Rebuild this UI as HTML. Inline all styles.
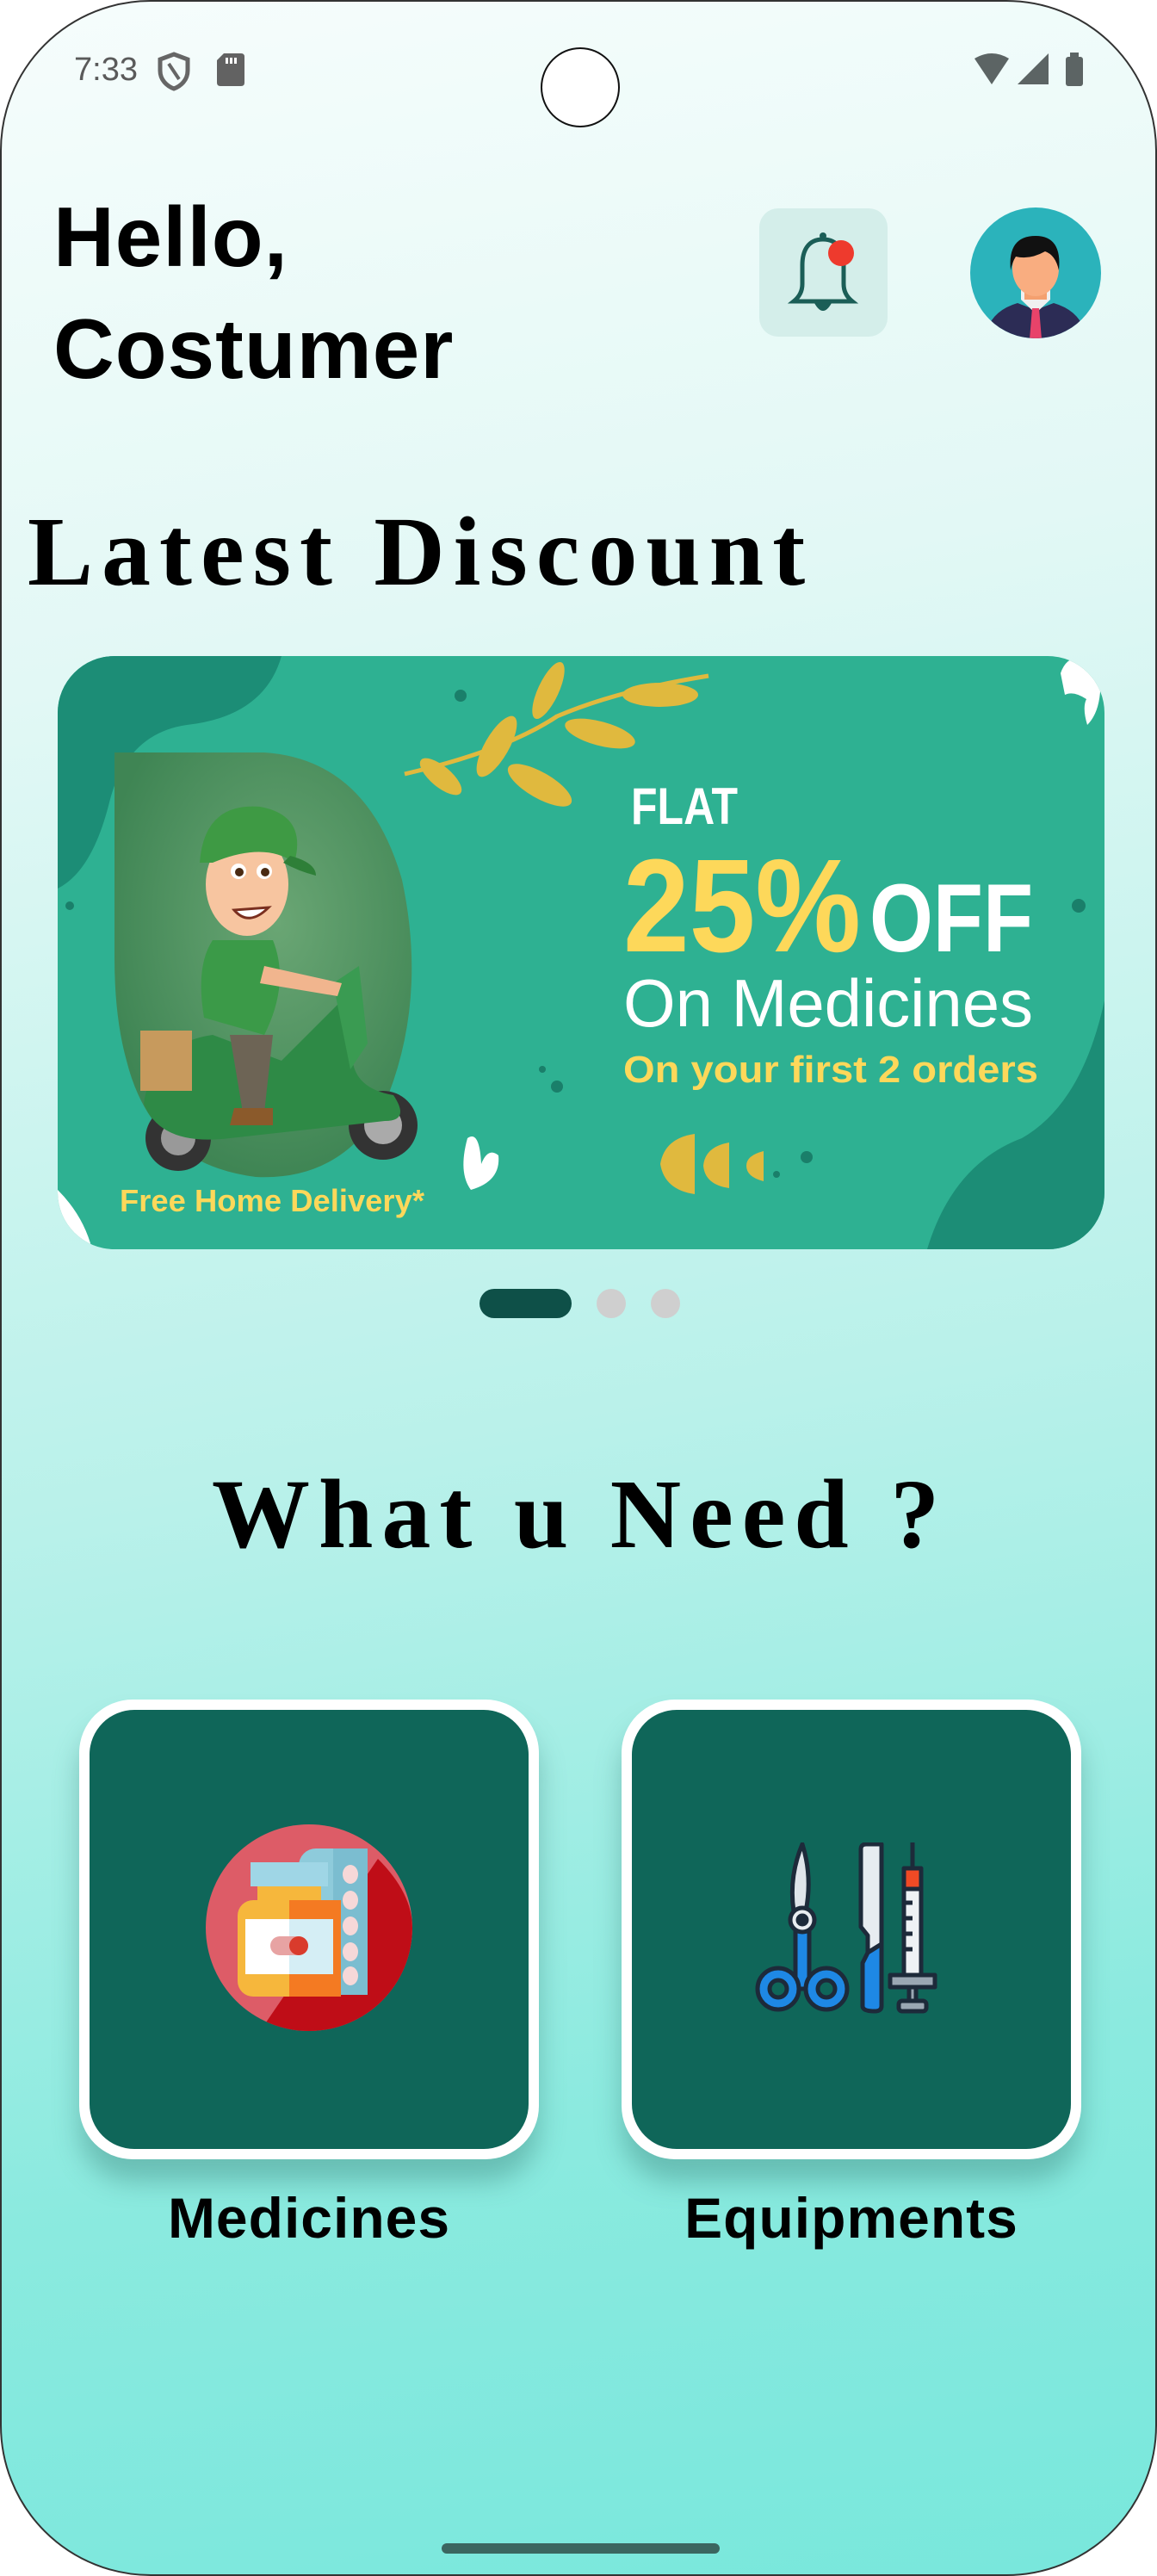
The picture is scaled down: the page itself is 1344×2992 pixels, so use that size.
<!DOCTYPE html>
<html><head><meta charset="utf-8">
<style>
*{margin:0;padding:0;box-sizing:border-box}
html,body{width:1344px;height:2992px;background:#fff;overflow:hidden;font-family:"Liberation Sans",sans-serif}
.phone{position:absolute;left:0;top:0;width:1344px;height:2992px;border-radius:175px;border:2px solid #333;overflow:hidden;background:linear-gradient(170deg,#f6fdfc 0%,#e2f8f5 25%,#b9f1ea 55%,#8beadf 80%,#78e7dc 100%)}
.abs{position:absolute}
.hello{left:60px;font-weight:bold;font-size:98px;color:#000;letter-spacing:1px;line-height:1}
.serif{font-family:"Liberation Serif",serif;font-weight:bold;color:#000;font-size:114px;letter-spacing:10px;line-height:1;white-space:nowrap}
.card{width:534px;height:534px;border-radius:62px;background:#fff;box-shadow:0 26px 30px rgba(40,110,100,.35)}
.card .in{position:absolute;left:12px;top:12px;right:12px;bottom:12px;border-radius:52px;background:#0f6659}
.lbl{font-size:66px;font-weight:bold;color:#000;width:534px;text-align:center;letter-spacing:1px}
</style></head><body>
<div class="phone">
  <!-- status bar -->
  <div class="abs" style="left:84px;top:58px;font-size:38px;color:#5a5a5a">7:33</div>
  <svg class="abs" style="left:180px;top:58px" width="40" height="46" viewBox="0 0 40 46"><path d="M20 3 L36 9 V22 C36 33 28 40 20 43 C12 40 4 33 4 22 V9 Z" fill="none" stroke="#666" stroke-width="5"/><path d="M14 14 L26 32" stroke="#666" stroke-width="4"/></svg>
  <svg class="abs" style="left:250px;top:60px" width="32" height="38" viewBox="0 0 32 38"><path d="M8 0 H28 Q32 0 32 4 V34 Q32 38 28 38 H4 Q0 38 0 34 V8 Z" fill="#626262"/><rect x="10" y="5" width="3" height="7" fill="#fff"/><rect x="15" y="5" width="3" height="7" fill="#fff"/><rect x="20" y="5" width="3" height="7" fill="#fff"/></svg>
  <div class="abs" style="left:626px;top:53px;width:92px;height:93px;border-radius:50%;background:#fff;border:2px solid #111"></div>
  <svg class="abs" style="left:1128px;top:58px" width="136" height="42" viewBox="0 0 136 42"><path d="M2 8 Q22 -4 42 8 L22 38 Z" fill="#5c6464"/><path d="M52 38 L88 2 V38 Z" fill="#5c6464"/><rect x="108" y="6" width="20" height="34" rx="3" fill="#5c6464"/><rect x="113" y="1" width="10" height="6" fill="#5c6464"/></svg>

  <!-- header -->
  <div class="abs hello" style="top:224px">Hello,</div>
  <div class="abs hello" style="top:354px">Costumer</div>
  <div class="abs" style="left:880px;top:240px;width:149px;height:149px;border-radius:22px;background:#d4eeea"></div>
  <svg class="abs" style="left:880px;top:240px" width="149" height="149" viewBox="0 0 149 149">
    <path d="M74 36 C56 36 50 50 50 66 V88 Q50 100 40 108 H108 Q98 100 98 88 V66 C98 50 92 36 74 36 Z" fill="none" stroke="#1b5e57" stroke-width="5"/>
    <path d="M64 110 Q74 128 84 110 Z" fill="#1b5e57"/>
    <circle cx="74" cy="32" r="4" fill="#1b5e57"/>
    <circle cx="95" cy="52" r="15" fill="#ee3a2d"/>
  </svg>
  <svg class="abs" style="left:1124px;top:238px" width="154" height="154" viewBox="0 0 154 154">
    <defs><clipPath id="av"><circle cx="77" cy="77" r="76"/></clipPath></defs>
    <circle cx="77" cy="77" r="76" fill="#2bb3bb"/>
    <g clip-path="url(#av)">
      <path d="M18 154 Q22 122 56 112 L77 120 L98 112 Q132 122 136 154 Z" fill="#2c2c55"/>
      <path d="M60 108 L77 124 L94 108 L94 96 H60 Z" fill="#f0f0f0"/>
      <path d="M73 118 H81 L84 154 H70 Z" fill="#e8436a"/>
      <rect x="64" y="88" width="26" height="20" fill="#f4a06f"/>
      <ellipse cx="77" cy="72" rx="27" ry="32" fill="#f9ad80"/>
      <path d="M48 74 Q44 34 77 34 Q108 34 104 74 Q100 56 88 52 Q70 62 54 58 Q50 64 48 74 Z" fill="#111"/>
    </g>
  </svg>

  <!-- Latest Discount -->
  <div class="abs serif" style="left:30px;top:582px">Latest Discount</div>

  <!-- banner -->
  <div class="abs" style="left:65px;top:760px;width:1216px;height:689px;border-radius:66px;overflow:hidden;background:#2eb192">
  <svg width="1216" height="689" viewBox="0 0 1216 689">
    <path d="M0 0 H260 Q240 70 150 80 Q80 90 60 170 Q40 250 0 270 Z" fill="#1c8d76"/>
    <path d="M1216 400 Q1190 520 1120 560 Q1040 590 1010 689 H1216 Z" fill="#1c8d76"/>
    <path d="M1165 20 Q1175 -10 1210 10 Q1216 60 1196 80 Q1190 60 1195 50 Q1180 40 1170 45 Z" fill="#fff"/>
    <path d="M0 620 Q30 650 40 689 H20 Q10 660 0 650 Z" fill="#fff"/>
    <path d="M476 560 Q490 550 492 590 Q500 570 512 580 Q515 610 480 620 Q465 600 476 560 Z" fill="#fff"/>
    <path d="M403 137 Q520 110 580 70 Q650 40 756 23" stroke="#e0b93e" stroke-width="5" fill="none"/>
    <ellipse cx="510" cy="105" rx="40" ry="14" transform="rotate(-60 510 105)" fill="#e0b93e"/>
    <ellipse cx="560" cy="150" rx="42" ry="15" transform="rotate(30 560 150)" fill="#e0b93e"/>
    <ellipse cx="570" cy="40" rx="36" ry="12" transform="rotate(-65 570 40)" fill="#e0b93e"/>
    <ellipse cx="630" cy="90" rx="42" ry="14" transform="rotate(15 630 90)" fill="#e0b93e"/>
    <ellipse cx="700" cy="45" rx="44" ry="14" transform="rotate(0 700 45)" fill="#e0b93e"/>
    <ellipse cx="445" cy="140" rx="30" ry="12" transform="rotate(40 445 140)" fill="#e0b93e"/>
    <circle cx="468" cy="46" r="7" fill="#1a7f6a"/><circle cx="1186" cy="290" r="8" fill="#1a7f6a"/><circle cx="14" cy="290" r="5" fill="#1a7f6a"/><circle cx="580" cy="500" r="7" fill="#1a7f6a"/><circle cx="563" cy="480" r="4" fill="#1a7f6a"/><circle cx="870" cy="582" r="7" fill="#1a7f6a"/><circle cx="835" cy="602" r="4" fill="#1a7f6a"/>
    <path d="M740 555 Q705 560 700 590 Q705 620 740 625 Z" fill="#e0b93e"/>
    <path d="M780 565 Q752 570 750 592 Q752 614 780 618 Z" fill="#e0b93e"/>
    <path d="M820 575 Q800 580 800 592 Q800 605 820 610 Z" fill="#e0b93e"/>
    <defs><radialGradient id="bg" cx="0.55" cy="0.4" r="0.6"><stop offset="0" stop-color="#6aa674"/><stop offset="1" stop-color="#3f8554"/></radialGradient></defs>
    <path d="M66 112 H240 Q360 120 400 260 Q430 400 380 520 Q330 610 230 605 Q110 590 80 470 Q66 420 66 350 Z" fill="url(#bg)"/>
    <ellipse cx="140" cy="560" rx="38" ry="38" fill="#333"/><ellipse cx="140" cy="560" rx="20" ry="20" fill="#999"/>
    <ellipse cx="378" cy="545" rx="40" ry="40" fill="#333"/><ellipse cx="378" cy="545" rx="22" ry="22" fill="#aaa"/>
    <path d="M100 520 Q110 450 180 440 L260 470 Q300 430 330 400 L345 440 Q330 500 390 510 Q410 540 380 540 L200 560 Q120 570 100 520 Z" fill="#2e8a46"/>
    <path d="M320 380 L350 360 L360 450 L340 480 Z" fill="#3a9b52"/>
    <rect x="96" y="435" width="60" height="70" fill="#c79a5d"/>
    <path d="M170 420 Q160 360 180 330 L250 330 Q270 380 240 440 Z" fill="#3b9a48"/>
    <path d="M200 440 L250 440 L240 530 L215 530 Z" fill="#6d6455"/>
    <path d="M205 525 H250 V545 H200 Z" fill="#8b5a2b"/>
    <path d="M240 360 L330 380 L325 395 L235 380 Z" fill="#f1b58e"/>
    <ellipse cx="220" cy="265" rx="48" ry="60" fill="#f7c5a0"/>
    <path d="M165 240 Q170 170 235 175 Q290 185 275 240 Q240 215 180 240 Z" fill="#3e9a44"/>
    <path d="M270 232 Q300 240 300 255 Q280 250 262 240 Z" fill="#2e7f38"/>
    <path d="M205 295 Q222 315 245 292 Z" fill="#fff" stroke="#7a2f1f" stroke-width="3"/>
    <circle cx="210" cy="250" r="9" fill="#fff"/><circle cx="240" cy="250" r="9" fill="#fff"/>
    <circle cx="211" cy="251" r="5" fill="#4a2a12"/><circle cx="241" cy="251" r="5" fill="#4a2a12"/>
    <g font-family="Liberation Sans, sans-serif" font-weight="bold">
      <text x="666" y="195" font-size="60" fill="#fff" textLength="124" lengthAdjust="spacingAndGlyphs">FLAT</text>
      <text x="657" y="343" font-size="154" fill="#fdd85a" textLength="276" lengthAdjust="spacingAndGlyphs">25%</text>
      <text x="943" y="343" font-size="112" fill="#fff" textLength="190" lengthAdjust="spacingAndGlyphs">OFF</text>
      <text x="657" y="430" font-size="78" font-weight="normal" fill="#fff" textLength="476" lengthAdjust="spacing">On Medicines</text>
      <text x="657" y="495" font-size="44" fill="#fdd85a" textLength="482" lengthAdjust="spacingAndGlyphs">On your first 2 orders</text>
      <text x="72" y="645" font-size="36" fill="#fdd85a" textLength="354" lengthAdjust="spacingAndGlyphs">Free Home Delivery*</text>
    </g>
  </svg>
  </div>

  <div class="abs" style="left:555px;top:1495px;width:107px;height:34px;border-radius:17px;background:#0e5048"></div>
  <div class="abs" style="left:691px;top:1495px;width:34px;height:34px;border-radius:50%;background:#cfcfcf"></div>
  <div class="abs" style="left:754px;top:1495px;width:34px;height:34px;border-radius:50%;background:#cfcfcf"></div>

  <div class="abs serif" style="left:244px;top:1700px">What u Need ?</div>

  <div class="abs card" style="left:90px;top:1972px"><div class="in"></div>
    <svg class="abs" style="left:147px;top:145px" width="240" height="240" viewBox="0 0 240 240">
      <defs><clipPath id="mc"><circle cx="120" cy="120" r="120"/></clipPath></defs>
      <circle cx="120" cy="120" r="120" fill="#dd5c67"/>
      <path d="M240 120 A120 120 0 0 1 70 230 L200 40 Q240 80 240 120 Z" fill="#bf0d17" clip-path="url(#mc)"/>
      <rect x="108" y="28" width="80" height="170" rx="20" fill="#8ecbdb"/>
      <rect x="148" y="28" width="40" height="170" fill="#7bbdd0"/>
      <g fill="#f6d8d8"><ellipse cx="168" cy="58" rx="9" ry="11"/><ellipse cx="168" cy="88" rx="9" ry="11"/><ellipse cx="168" cy="118" rx="9" ry="11"/><ellipse cx="168" cy="148" rx="9" ry="11"/><ellipse cx="168" cy="176" rx="9" ry="11"/></g>
      <rect x="52" y="44" width="90" height="28" fill="#9fd6e6"/>
      <rect x="60" y="72" width="74" height="20" fill="#f6b73c"/>
      <rect x="37" y="88" width="120" height="112" rx="18" fill="#f6b73c"/>
      <rect x="97" y="88" width="60" height="112" fill="#f47a22"/>
      <rect x="46" y="110" width="102" height="64" fill="#fff"/>
      <rect x="97" y="110" width="51" height="64" fill="#d5eef5"/>
      <rect x="75" y="130" width="44" height="22" rx="11" fill="#e7a3a3"/>
      <rect x="97" y="130" width="22" height="22" rx="11" fill="#d93b2c"/>
    </svg>
  </div>
  <div class="abs card" style="left:720px;top:1972px"><div class="in"></div>
    <svg class="abs" style="left:152px;top:166px" width="231" height="201" viewBox="0 0 231 201" stroke="#1d2a3a" stroke-width="5" stroke-linejoin="round">
      <path d="M58 2 Q42 40 48 80 L62 80 Q70 40 58 2 Z" fill="#dfe4ea"/>
      <path d="M50 100 V170 H66 V100 Z" fill="#1e88e5"/>
      <circle cx="30" cy="170" r="24" fill="#1e88e5"/><circle cx="30" cy="170" r="10" fill="#0f6659"/>
      <circle cx="86" cy="170" r="24" fill="#1e88e5"/><circle cx="86" cy="170" r="10" fill="#0f6659"/>
      <circle cx="58" cy="90" r="14" fill="#e9edf1"/><circle cx="58" cy="90" r="5" fill="#1d2a3a"/>
      <path d="M132 2 H150 V118 L134 128 V108 L126 98 V8 Q126 2 132 2 Z" fill="#e7ecf1"/>
      <path d="M134 128 L150 118 V190 Q150 196 142 196 Q128 196 128 190 V140 Z" fill="#1e88e5"/>
      <path d="M186 0 V30" fill="none"/>
      <rect x="176" y="30" width="20" height="24" fill="#f04a25"/>
      <rect x="176" y="54" width="20" height="100" fill="#eef2f5"/>
      <path d="M176 70 H186 M176 88 H186 M176 106 H186 M176 124 H186" fill="none"/>
      <rect x="160" y="154" width="52" height="14" fill="#9aa7b3"/>
      <rect x="182" y="168" width="8" height="16" fill="#9aa7b3"/>
      <rect x="170" y="184" width="32" height="12" rx="4" fill="#9aa7b3"/>
    </svg>
  </div>
  <div class="abs lbl" style="left:90px;top:2536px">Medicines</div>
  <div class="abs lbl" style="left:720px;top:2536px">Equipments</div>

  <div class="abs" style="left:511px;top:2952px;width:323px;height:12px;border-radius:6px;background:#3b6660"></div>
</div>
</body></html>
